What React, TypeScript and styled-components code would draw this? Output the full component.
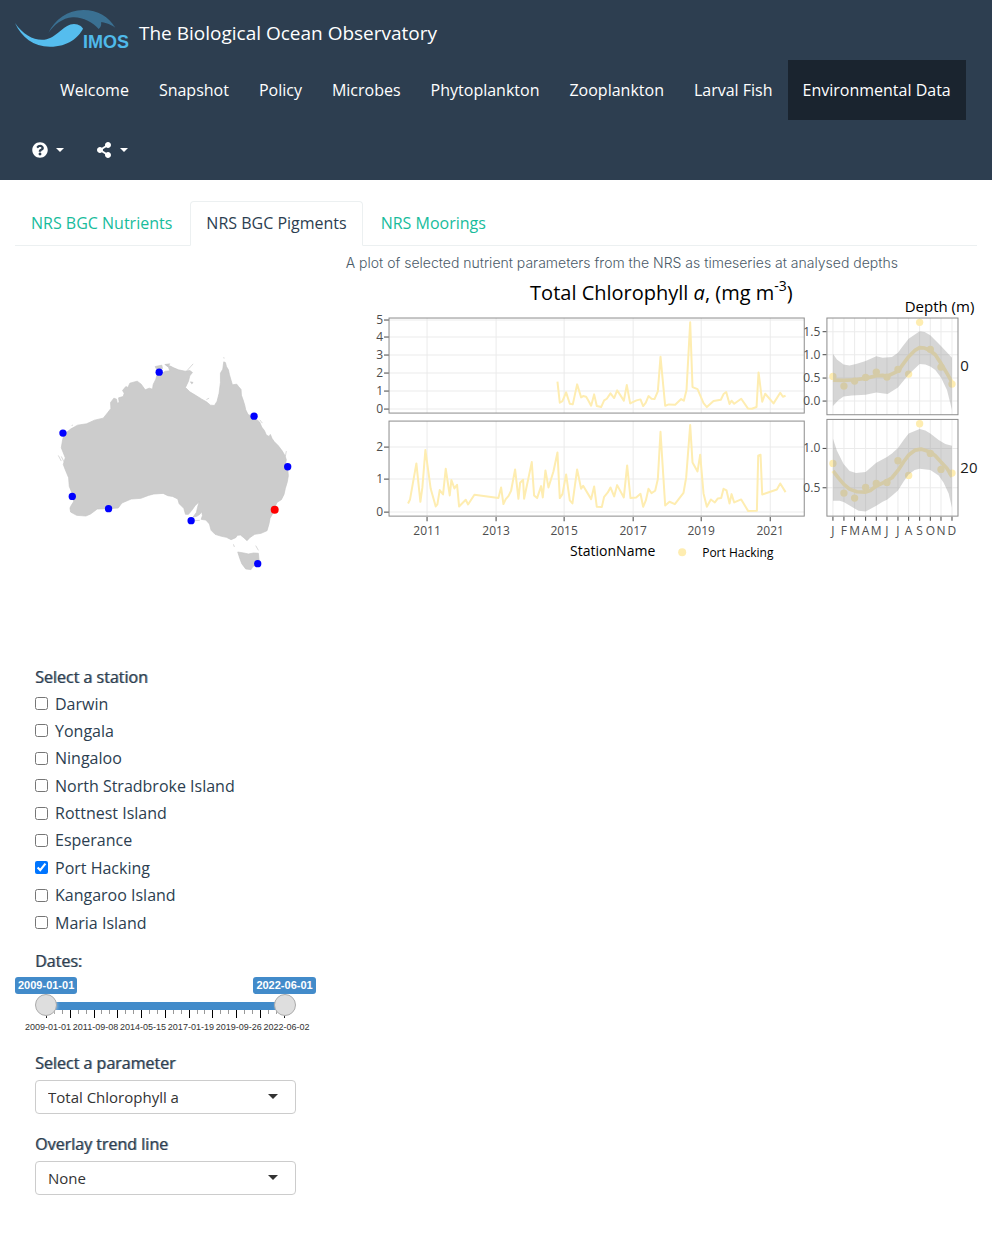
import React, { useState } from 'react';
import styled, { createGlobalStyle, css } from 'styled-components';
import { FaQuestionCircle, FaShareAlt } from 'react-icons/fa';

const GlobalStyle = createGlobalStyle`
  *, *::before, *::after { box-sizing: border-box; }
  body {
    margin: 0;
    background: #fff;
    color: #2c3e50;
    font-family: "Open Sans", "Noto Sans", sans-serif;
    font-size: 16px;
    line-height: 23px;
  }
`;

const Page = styled.div`
  padding-bottom: 60px;
`;

const Navbar = styled.header`
  background: #2d3e50;
  padding: 0 15px;
`;

const Brand = styled.a`
  display: flex;
  align-items: center;
  gap: 9px;
  height: 60px;
  color: #fff;
  font-size: 19px;
  text-decoration: none;
`;

const BrandName = styled.span`
  padding-top: 6px;
`;

const Logo = styled.svg`
  width: 115px;
  height: 50px;
  flex: none;
`;

const LogoText = styled.text`
  font: bold 18px "Liberation Sans", Arial, sans-serif;
  fill: #4fb9ea;
`;

const NavList = styled.ul`
  display: flex;
  flex-wrap: wrap;
  list-style: none;
  margin: 0 0 0 30px;
  padding: 0;
`;

const NavLink = styled.a<{ $active?: boolean }>`
  display: block;
  padding: 19px 15px 18px;
  color: #fff;
  background: ${(p) => (p.$active ? '#1a242f' : 'transparent')};
  text-decoration: none;
`;

const IconNav = styled.div`
  display: flex;
  height: 60px;
  padding-left: 1px;
`;

const MenuButton = styled.button`
  display: flex;
  align-items: center;
  gap: 8px;
  border: 0;
  padding: 0 16px;
  background: none;
  color: #fff;
  font-size: 16px;
`;

const Caret = styled.span<{ $size?: number }>`
  width: 0;
  height: 0;
  border: ${(p) => p.$size ?? 4}px solid transparent;
  border-top-color: currentColor;
  border-bottom: 0;
`;

const Tabs = styled.nav`
  display: flex;
  gap: 2px;
  margin: 21px 15px 0;
  border-bottom: 1px solid #ecf0f1;
`;

const Tab = styled.a<{ $active?: boolean }>`
  margin-bottom: -1px;
  padding: 10px 15px;
  border: 1px solid ${(p) => (p.$active ? '#ecf0f1' : 'transparent')};
  border-bottom-color: ${(p) => (p.$active ? '#fff' : 'transparent')};
  border-radius: 4px 4px 0 0;
  color: ${(p) => (p.$active ? '#2c3e50' : '#18bc9c')};
  text-decoration: none;
`;

const Columns = styled.main`
  display: grid;
  grid-template-columns: 1fr 2fr;
`;

const Column = styled.div`
  min-width: 0;
  padding: 0 15px;
`;

const MapDrawing = styled.svg`
  display: block;
  width: 100%;
`;

const Panel = styled.form`
  padding: 0 20px;
`;

const Group = styled.fieldset`
  margin: 0;
  padding: 0;
  border: 0;
  min-width: 0;
`;

const heading = css`
  font-weight: 400;
  text-shadow: 1px 0 rgba(44, 62, 80, 0.55);
`;

const Legend = styled.legend`
  padding: 0;
  ${heading}
`;

const FieldLabel = styled.label`
  display: block;
  margin-bottom: 5px;
  ${heading}
`;

const CheckList = styled.div`
  display: flex;
  flex-direction: column;
  justify-content: space-between;
  min-height: 242px;
  margin: 4px 0 15px;
`;

const Check = styled.label`
  display: flex;
  align-items: center;
  gap: 7px;

  input {
    width: 13px;
    height: 13px;
    margin: 0 0 1px;
    accent-color: #0075ff;
  }
`;

const Badges = styled.div`
  display: flex;
  justify-content: space-between;
  margin: 4px -20px 0;
`;

const Badge = styled.output`
  padding: 0 3px;
  border-radius: 3px;
  background: #428bca;
  color: #fff;
  font: bold 11px/17px "Liberation Sans", Arial, sans-serif;
`;

const Track = styled.div`
  display: grid;
  height: 22px;
  align-items: center;

  > * { grid-area: 1 / 1; }
`;

const Bar = styled.div`
  height: 8px;
  margin: 2px 11px 0;
  background: #428bca;
`;

const Range = styled.input`
  appearance: none;
  width: 100%;
  height: 22px;
  margin: 0;
  background: none;
  pointer-events: none;
  z-index: 1;

  &::-webkit-slider-thumb {
    appearance: none;
    width: 22px;
    height: 22px;
    border: 1px solid #ababab;
    border-radius: 50%;
    background: #dedede;
    box-shadow: 1px 1px 3px rgba(255, 255, 255, 0.3);
    pointer-events: auto;
  }
`;

const Ticks = styled.div`
  display: flex;
  justify-content: space-between;
  height: 9px;
  margin: -6px 11px 3px;
`;

const Tick = styled.i<{ $major: boolean }>`
  width: 1px;
  height: ${(p) => (p.$major ? 8 : 4)}px;
  background: ${(p) => (p.$major ? '#000' : '#999')};
`;

const Scale = styled.div`
  display: flex;
  justify-content: space-between;
  margin: 0 -14px 20px -10px;
  color: #333;
  font: 9px/10px "Liberation Sans", Arial, sans-serif;
  white-space: nowrap;
`;

const SelectBox = styled.div`
  display: grid;
  align-items: center;
  margin-bottom: 19px;

  > * { grid-area: 1 / 1; }
  > span { justify-self: end; margin-right: 18px; color: #333; pointer-events: none; }
`;

const Select = styled.select`
  appearance: none;
  width: 100%;
  height: 34px;
  padding: 0 12px;
  border: 1px solid #ccc;
  border-radius: 4px;
  background: #fff;
  color: #333;
  font: 15px "Open Sans", "Noto Sans", sans-serif;
`;

const Caption = styled.p`
  margin: 7px 0 5px;
  color: #4a5a68;
  font: 300 14px/20px Inter, "Open Sans", sans-serif;
`;

const Plot = styled.svg`
  display: block;
  width: 100%;
  overflow: visible;
`;

const PlotText = styled.text<{ $size?: number; $tone?: string }>`
  font-family: "Open Sans", "Noto Sans", sans-serif;
  font-size: ${(p) => p.$size ?? 12}px;
  fill: ${(p) => p.$tone ?? '#4d4d4d'};
`;

const YELLOW = '#feedb1';
const GRID = '#ebebeb';
const FRAME = '#8c8c8c';

const navItems = ['Welcome', 'Snapshot', 'Policy', 'Microbes', 'Phytoplankton', 'Zooplankton', 'Larval Fish', 'Environmental Data'];
const tabs = ['NRS BGC Nutrients', 'NRS BGC Pigments', 'NRS Moorings'];
const stationNames = ['Darwin', 'Yongala', 'Ningaloo', 'North Stradbroke Island', 'Rottnest Island', 'Esperance', 'Port Hacking', 'Kangaroo Island', 'Maria Island'];
const scaleDates = ['2009-01-01', '2011-09-08', '2014-05-15', '2017-01-19', '2019-09-26', '2022-06-02'];

const mapStations = [[358, 97], [643, 229], [69, 280], [744, 381], [97, 470], [206, 507], [454, 543], [654, 672]];

const mainland =
  'M552,66 L557,68 560,80 566,90 569,104 573,118 578,135 591,133 597,141 604,149 605,166 610,180 615,196 618,210 625,224 637,230 650,238 660,247 666,262 674,272 680,286 688,290 692,284 697,296 704,306 716,318 728,334 736,348 740,360 738,370 744,385 746,408 743,426 737,446 733,464 725,480 712,488 706,502 700,520 691,536 688,552 682,573 664,581 645,584 630,594 622,603 612,594 602,586 593,587 588,594 574,600 560,593 545,590 526,584 514,572 509,553 498,541 484,539 488,528 486,516 480,524 471,530 460,532 470,518 473,504 478,486 466,498 456,512 446,524 437,524 432,506 418,492 414,478 398,470 384,468 370,461 342,463 326,467 303,476 274,478 246,490 235,505 204,507 172,508 152,523 138,529 110,527 92,517 90,505 94,497 101,486 97,462 88,440 86,414 76,390 70,374 76,354 64,324 68,300 72,284 92,268 113,256 140,252 164,241 190,235 203,219 213,206 212,188 222,175 230,178 232,190 238,188 236,174 250,170 253,160 248,152 258,140 264,143 270,130 292,124 304,133 316,150 328,145 338,148 340,134 348,118 352,104 368,100 376,94 390,93 386,82 378,76 390,78 402,84 416,90 436,94 450,92 458,98 450,108 446,124 437,143 450,156 470,168 486,178 500,186 512,196 524,197 532,184 538,160 542,128 542,100 549,88Z';
const tasmania = 'M594,637 L612,640 626,643 642,640 656,641 658,662 652,676 640,680 634,690 618,688 606,672 600,656Z';
const islets = ['M346,80 L366,76 368,86 350,88Z', 'M375,74 L390,72 384,78Z', 'M442,92 L460,72 M452,126 L460,128 456,132Z', 'M500,179 L508,175', 'M552,52 L553,56', 'M55,347 L64,364 M64,350 L72,366', 'M95,257 L99,256', 'M740,334 L737,350', 'M464,543 L480,542', 'M581,614 L584,622 M648,618 L656,632', 'M660,240 L668,250'];

const surface = '652,395 659,458 667,453 678,427 689,461 698,463 711,403 723,442 729,438 738,440 745,452 753,467 762,433 770,468 783,471 792,451 800,446 811,430 822,444 831,421 841,436 851,452 860,405 870,460 889,451 901,448 909,468 917,458 925,438 934,446 943,447 953,424 961,320 975,467 986,463 1005,464 1023,447 1031,452 1039,420 1050,217 1057,411 1072,417 1090,459 1100,471 1120,453 1142,449 1150,432 1158,426 1168,462 1174,452 1182,461 1203,446 1223,475 1235,476 1249,471 1255,367 1266,455 1275,431 1300,460 1320,428 1328,440 1336,437';
const deep = '204,280 210,268 229,160 241,275 247,232 256,120 272,236 287,289 292,283 299,240 309,253 317,176 329,256 334,210 343,235 351,224 357,289 377,269 384,283 403,254 475,264 483,232 490,282 497,267 505,258 513,242 525,178 535,266 540,218 549,209 552,266 575,156 582,256 591,264 603,228 608,262 616,181 625,232 640,184 652,127 659,264 667,252 678,193 689,271 697,280 711,178 723,236 729,227 753,267 762,229 770,290 785,291 792,260 803,247 811,232 822,259 831,225 851,262 861,166 871,264 888,262 901,251 909,290 917,271 925,236 934,249 945,242 953,207 961,65 975,286 988,275 1004,282 1030,248 1038,202 1050,45 1057,157 1072,184 1080,134 1090,250 1100,290 1112,268 1124,277 1133,265 1143,264 1150,236 1159,241 1168,280 1174,252 1182,277 1203,268 1224,303 1250,302 1254,137 1261,134 1266,253 1310,238 1320,220 1336,246';

const monthX = [113, 146, 178, 211, 243, 275, 308, 340, 373, 405, 437, 470];
const months = ['J', 'F', 'M', 'A', 'M', 'J', 'J', 'A', 'S', 'O', 'N', 'D'];

const seasonal = [
  {
    top: 84,
    grid: [125, 194, 264, 333],
    dots: [259, 288, 273, 262, 246, 261, 238, 252, 97, 178, 231, 282],
    band: '113,191 125,208 145,223 163,226 185,221 211,213 243,199 262,203 290,201 308,188 320,172 340,146 373,124 388,126 405,136 437,168 470,203 470,360 455,300 437,262 420,240 405,229 390,223 373,222 358,236 340,253 308,292 277,312 243,307 211,314 170,316 145,319 130,330 113,348',
    curve: '113,270 146,271 178,269 211,265 243,257 262,256 275,259 308,243 325,220 340,200 360,180 373,173 388,174 405,182 420,194 437,220 455,250 470,276',
  },
  {
    top: 388,
    grid: [475, 593],
    dots: [520, 609, 624, 592, 580, 577, 512, 556, 401, 490, 538, 549],
    band: '113,445 125,482 145,522 163,543 182,549 211,546 243,518 275,501 290,490 308,474 325,450 340,430 373,417 390,421 405,430 430,450 450,462 470,467 470,653 460,610 445,578 430,556 405,540 373,536 358,540 340,553 325,574 308,601 290,617 275,629 262,635 243,647 211,664 190,662 178,655 163,646 145,636 133,632 113,632',
    curve: '113,542 130,564 146,583 163,597 185,605 211,606 225,601 243,588 275,572 290,563 308,541 325,515 340,495 360,480 377,477 405,486 420,497 437,516 455,535 470,560',
  },
];

const years = [2011, 2013, 2015, 2017, 2019, 2021].map((year, i) => ({ year, x: 427 + Math.round(i * 68.5) }));
const series = [
  { top: 318, ticks: [409, 391, 373, 355, 337, 320] },
  { top: 421, ticks: [512, 479, 447] },
];
const seasonTicks = [
  ['1.5', 332], ['1.0', 355], ['0.5', 378], ['0.0', 401], ['1.0', 448], ['0.5', 488],
] as [string, number][];

function StationMap() {
  return (
    <MapDrawing viewBox="15 246 301 420" role="img" aria-label="Map of stations">
      <g transform="translate(40 340) scale(0.33333)" fill="#ccc" stroke="#c4c4c4" strokeWidth="2" strokeLinejoin="round">
        <path d={mainland} />
        <path d={tasmania} />
        {islets.map((d) => <path key={d} d={d} />)}
        {mapStations.map(([x, y]) => <circle key={x} cx={x} cy={y} r="11" fill="#00f" stroke="none" />)}
        <circle cx="705" cy="510" r="12" fill="#f00" stroke="none" />
      </g>
    </MapDrawing>
  );
}

function ChlorophyllPlot() {
  return (
    <Plot viewBox="346 278 631 300" role="img" aria-label="Total Chlorophyll a">
      <PlotText x="530" y="300" $size={20} $tone="#000">
        Total Chlorophyll <tspan fontStyle="italic">a</tspan>, (mg m<tspan dy="-9" fontSize="14">-3</tspan><tspan dy="9">)</tspan>
      </PlotText>
      <PlotText x="974" y="312" textAnchor="end" $size={15} $tone="#000">Depth (m)</PlotText>

      {series.map(({ top, ticks }) => (
        <g key={top}>
          {ticks.map((y, value) => (
            <g key={y}>
              <path d={`M389,${y}H804`} stroke={GRID} />
              <path d={`M384,${y}H389`} stroke="#444" />
              <PlotText x="383" y={y + 4} textAnchor="end">{value}</PlotText>
            </g>
          ))}
          {years.map(({ x }) => <path key={x} d={`M${x},${top}v95`} stroke={GRID} />)}
        </g>
      ))}
      {years.map(({ year, x }) => (
        <g key={year}>
          <path d={`M${x},517v4`} stroke="#444" />
          <PlotText x={x} y="535" textAnchor="middle">{year}</PlotText>
        </g>
      ))}
      <g fill="none" stroke={YELLOW} strokeWidth="6" strokeLinejoin="round">
        <polyline points={surface} transform="translate(340 250) scale(0.33333)" />
        <polyline points={deep} transform="translate(340 410) scale(0.33333)" />
      </g>
      {series.map(({ top }) => (
        <rect key={top} x="389" y={top} width="415" height="95" fill="none" stroke={FRAME} />
      ))}

      <g transform="translate(795 290) scale(0.33333)">
        {seasonal.map((s) => (
          <g key={s.top}>
            {monthX.map((x) => <path key={x} d={`M${x},${s.top}v290`} stroke={GRID} strokeWidth="3" />)}
            {s.grid.map((y) => <path key={y} d={`M95,${y}H488`} stroke={GRID} strokeWidth="3" />)}
            {s.grid.map((y) => <path key={-y} d={`M82,${y}H94`} stroke="#444" strokeWidth="3" />)}
            {s.dots.map((y, i) => <circle key={i} cx={monthX[i]} cy={y} r="11" fill={YELLOW} />)}
            <polyline points={s.curve} fill="none" stroke={YELLOW} strokeWidth="11" strokeLinejoin="round" />
            <polygon points={s.band} fill="#999" fillOpacity="0.4" />
            <rect x="95" y={s.top} width="393" height="290" fill="none" stroke={FRAME} strokeWidth="3" />
          </g>
        ))}
        {monthX.map((x) => <path key={x} d={`M${x},680v12`} stroke="#444" strokeWidth="3" />)}
      </g>
      {seasonTicks.map(([label, y]) => (
        <PlotText key={y} x="820" y={y + 4} textAnchor="end">{label}</PlotText>
      ))}
      {months.map((m, i) => (
        <PlotText key={i} x={795 + monthX[i] / 3} y="535" textAnchor="middle">{m}</PlotText>
      ))}
      <PlotText x="960" y="371" $size={15} $tone="#1a1a1a">0</PlotText>
      <PlotText x="960" y="473" $size={15} $tone="#1a1a1a">20</PlotText>

      <PlotText x="570" y="556" $size={14} $tone="#000">StationName</PlotText>
      <circle cx="682" cy="552" r="4" fill={YELLOW} />
      <PlotText x="702" y="557" $tone="#000">Port Hacking</PlotText>
    </Plot>
  );
}

export default function App() {
  const [selected, setSelected] = useState<string[]>(['Port Hacking']);
  const toggle = (name: string) =>
    setSelected((s) => (s.includes(name) ? s.filter((n) => n !== name) : [...s, name]));

  return (
    <Page>
      <GlobalStyle />
      <Navbar>
        <Brand href="#">
          <Logo viewBox="15 5 115 50" aria-label="IMOS">
            <g transform="scale(0.33333)">
              <path fill="#3a7092" d="M145,99 C165,58 202,30 250,30 C295,30 325,50 346,83 C330,72 312,67 303,67 C305,74 303,82 296,87 C280,68 245,50 218,52 C187,54 162,75 145,99Z" />
              <path fill="#55bdee" d="M45,69 C72,108 108,125 140,118 C175,108 192,72 222,72 C238,72 247,82 249,86 C235,112 205,140 150,140 C100,140 65,112 45,69Z" />
            </g>
            <LogoText x="83" y="48">IMOS</LogoText>
          </Logo>
          <BrandName>The Biological Ocean Observatory</BrandName>
        </Brand>
        <NavList>
          {navItems.map((item) => (
            <li key={item}><NavLink href="#" $active={item === 'Environmental Data'}>{item}</NavLink></li>
          ))}
        </NavList>
        <IconNav>
          <MenuButton type="button" aria-label="Help"><FaQuestionCircle /><Caret /></MenuButton>
          <MenuButton type="button" aria-label="Share"><FaShareAlt /><Caret /></MenuButton>
        </IconNav>
      </Navbar>

      <Tabs>
        {tabs.map((tab) => <Tab key={tab} href="#" $active={tab === 'NRS BGC Pigments'}>{tab}</Tab>)}
      </Tabs>

      <Columns>
        <Column>
          <StationMap />
          <Panel>
            <Group>
              <Legend>Select a station</Legend>
              <CheckList>
                {stationNames.map((name) => (
                  <Check key={name}>
                    <input type="checkbox" checked={selected.includes(name)} onChange={() => toggle(name)} />
                    {name}
                  </Check>
                ))}
              </CheckList>
            </Group>
            <Group>
              <Legend>Dates:</Legend>
              <Badges>
                <Badge>2009-01-01</Badge>
                <Badge>2022-06-01</Badge>
              </Badges>
              <Track>
                <Bar />
                <Range type="range" min="0" max="100" defaultValue="0" aria-label="Start date" />
                <Range type="range" min="0" max="100" defaultValue="100" aria-label="End date" />
              </Track>
              <Ticks>
                {Array.from({ length: 31 }, (_, i) => <Tick key={i} $major={i % 3 === 0} />)}
              </Ticks>
              <Scale>
                {scaleDates.map((d) => <span key={d}>{d}</span>)}
              </Scale>
            </Group>
            <FieldLabel htmlFor="parameter">Select a parameter</FieldLabel>
            <SelectBox>
              <Select id="parameter"><option>Total Chlorophyll a</option></Select>
              <Caret $size={5} />
            </SelectBox>
            <FieldLabel htmlFor="trend">Overlay trend line</FieldLabel>
            <SelectBox>
              <Select id="trend"><option>None</option></Select>
              <Caret $size={5} />
            </SelectBox>
          </Panel>
        </Column>
        <Column>
          <Caption>A plot of selected nutrient parameters from the NRS as timeseries at analysed depths</Caption>
          <ChlorophyllPlot />
        </Column>
      </Columns>
    </Page>
  );
}
